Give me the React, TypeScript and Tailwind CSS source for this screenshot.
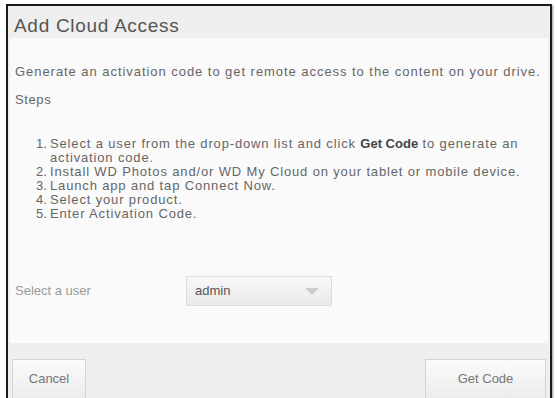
import React from 'react';

const steps: React.ReactNode[] = [
  <>
    Select a user from the drop-down list and click{' '}
    <span className="font-bold text-[#444] tracking-normal">Get Code</span> to generate an activation code.
  </>,
  'Install WD Photos and/or WD My Cloud on your tablet or mobile device.',
  'Launch app and tap Connect Now.',
  'Select your product.',
  'Enter Activation Code.',
];

export default function App() {
  return (
    <div
      className="w-[557px] h-[398px] bg-white pt-[4px] pl-[6px] pr-[5px] overflow-hidden"
      style={{ fontFamily: '"Liberation Sans", Arial, sans-serif' }}
    >
      <div className="h-[400px] border-2 border-[#1a1a1a] bg-[#efefef] flex flex-col shadow-[1px_1px_2px_#999]">
        {/* header */}
        <div className="h-[32px] pl-[6px] pt-[10px]">
          <h1 className="text-[19px] text-[#555] leading-none tracking-[0.7px]">Add Cloud Access</h1>
        </div>

        {/* body */}
        <div className="mx-[2px] h-[305px] bg-[#fafafa] pl-[5px] pr-[4px] pt-[27px] text-[13px] text-[#666] leading-[14px]">
          <p className="tracking-[0.95px]">
            Generate an activation code to get remote access to the content on your drive.
          </p>
          <p className="mt-[14px] tracking-[0.6px]">Steps</p>
          <ol className="mt-[30px] pl-[21px] pr-[8px] flex flex-col tracking-[0.85px]">
            {steps.map((s, i) => (
              <li key={i} className="flex">
                <span className="w-[14px] shrink-0 tracking-normal">{i + 1}.</span>
                <span>{s}</span>
              </li>
            ))}
          </ol>
          <div className="mt-[55px] flex items-center">
            <span className="w-[171px] text-[#999]">Select a user</span>
            <div className="w-[146px] h-[30px] border border-[#ddd] bg-gradient-to-b from-[#f8f8f8] to-[#e9e9e9] flex items-center justify-between pl-[8px] pr-[12px] text-[#555]">
              <span>admin</span>
              <span className="w-0 h-0 border-l-[7px] border-r-[7px] border-t-[7px] border-l-transparent border-r-transparent border-t-[#ccc]" />
            </div>
          </div>
        </div>

        {/* footer */}
        <div className="flex-1 flex items-start justify-between px-[4px] pt-[16px] text-[13px] text-[#777]">
          <button className="w-[74px] h-[40px] border border-[#d4d4d4] bg-gradient-to-b from-[#fbfbfb] to-[#ececec]">
            Cancel
          </button>
          <button className="w-[121px] h-[40px] border border-[#d4d4d4] bg-gradient-to-b from-[#fbfbfb] to-[#ececec]">
            Get Code
          </button>
        </div>
      </div>
    </div>
  );
}
